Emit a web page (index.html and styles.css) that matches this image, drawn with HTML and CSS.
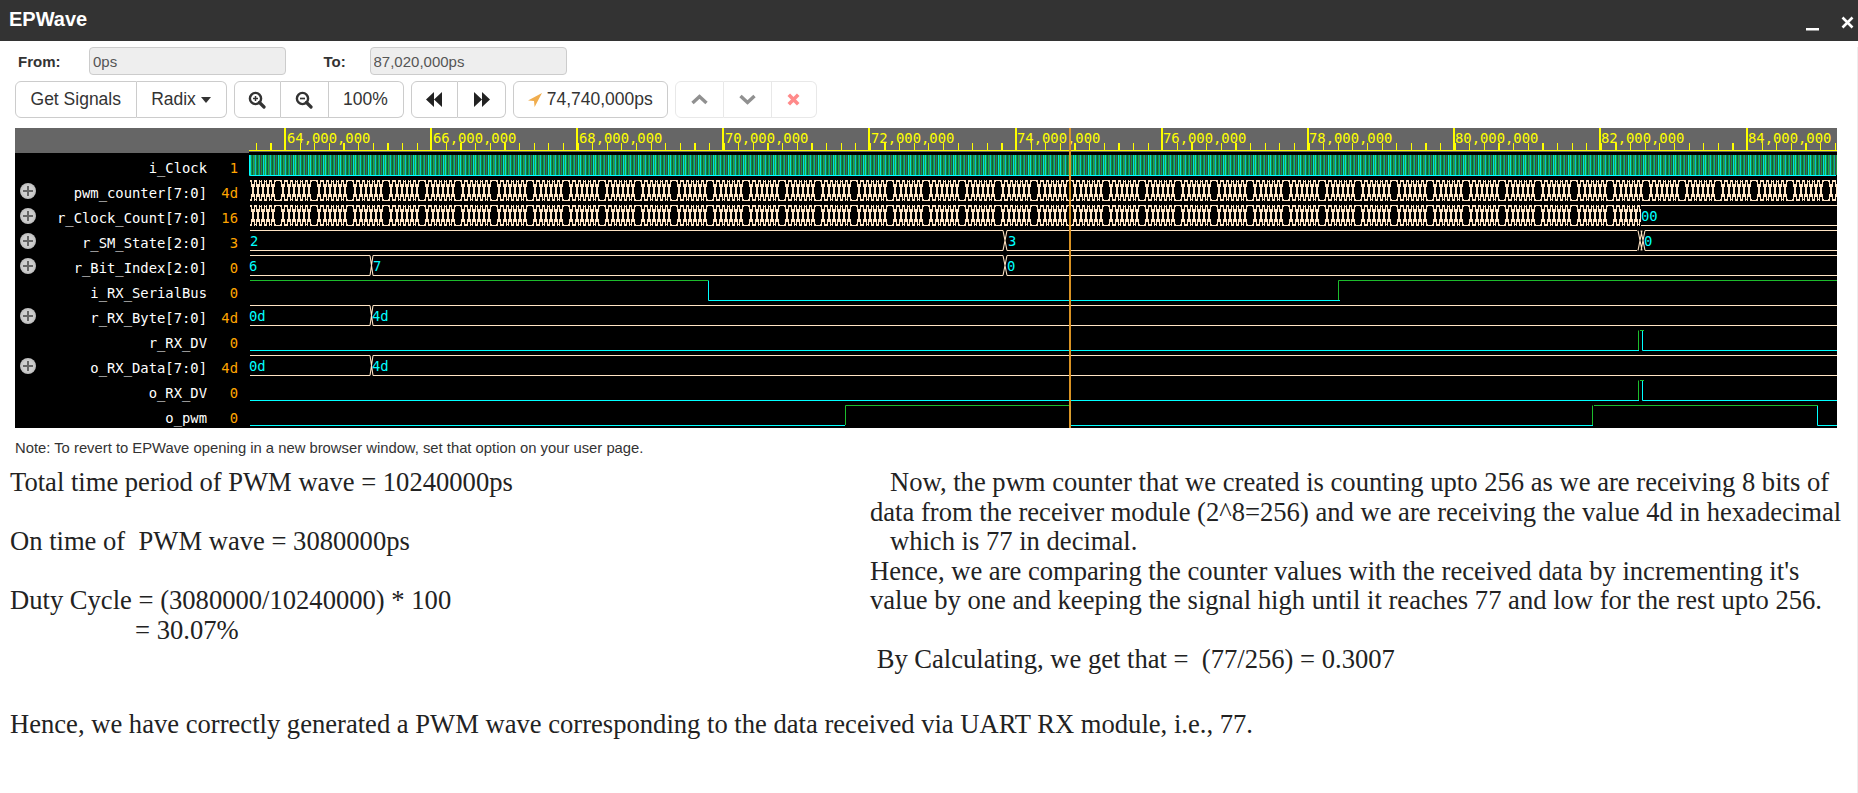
FILE: index.html
```html
<!DOCTYPE html>
<html lang="en">
<head>
<meta charset="utf-8">
<title>EPWave</title>
<link rel="stylesheet" href="styles.css">
</head>
<body>
<div class="app">
  <header class="titlebar">
    <h1 class="title">EPWave</h1>
    <div class="win-actions">
      <svg class="win-min" width="13" height="3" viewBox="0 0 13 3"><rect width="13" height="2.5" fill="#fff"/></svg>
      <svg class="win-close" width="13" height="13" viewBox="0 0 13 13"><path d="M1.5 1.5L11.5 11.5M11.5 1.5L1.5 11.5" stroke="#fff" stroke-width="2.6" fill="none"/></svg>
    </div>
  </header>

  <main class="content">
    <div class="range">
      <label class="range-label range-from">From:</label>
      <input class="range-input" value="0ps" disabled>
      <label class="range-label range-to">To:</label>
      <input class="range-input" value="87,020,000ps" disabled>
    </div>

    <div class="toolbar">
      <div class="btn-group">
        <button class="btn btn-signals">Get Signals</button>
        <button class="btn btn-radix">Radix<span class="caret"></span></button>
      </div>
      <div class="btn-group">
        <button class="btn btn-icon"><svg width="18" height="18" viewBox="0 0 18 18"><circle cx="7.5" cy="7.5" r="5.6" fill="none" stroke="#333" stroke-width="2.4"/><path d="M11.5 11.5L16 16" stroke="#333" stroke-width="3.2" stroke-linecap="round"/><path d="M5 7.5H10M7.5 5V10" stroke="#333" stroke-width="1.5"/></svg></button>
        <button class="btn btn-icon"><svg width="18" height="18" viewBox="0 0 18 18"><circle cx="7.5" cy="7.5" r="5.6" fill="none" stroke="#333" stroke-width="2.4"/><path d="M11.5 11.5L16 16" stroke="#333" stroke-width="3.2" stroke-linecap="round"/><path d="M5 7.5H10" stroke="#333" stroke-width="1.7"/></svg></button>
        <button class="btn btn-zoom">100%</button>
      </div>
      <div class="btn-group">
        <button class="btn btn-icon"><svg width="17" height="15" viewBox="0 0 17 15"><path d="M8 0V15L0 7.5ZM16 0V15L8 7.5Z" fill="#222"/></svg></button>
        <button class="btn btn-icon"><svg width="17" height="15" viewBox="0 0 17 15"><path d="M1 0V15L9 7.5ZM9 0V15L17 7.5Z" fill="#222"/></svg></button>
      </div>
      <div class="btn-group">
        <button class="btn btn-cursor"><svg class="cursor-icon" width="14" height="14" viewBox="0 0 14 14"><path d="M14 0L0 7.6L6 8L6.6 14Z" fill="#f0ad4e"/></svg>74,740,000ps</button>
      </div>
      <div class="btn-group btn-group-off">
        <button class="btn btn-step btn-off"><svg width="17" height="11" viewBox="0 0 17 11"><path d="M1.5 9L8.5 2.5L15.5 9" fill="none" stroke="#555" stroke-width="3.4"/></svg></button>
        <button class="btn btn-step btn-off"><svg width="17" height="11" viewBox="0 0 17 11"><path d="M1.5 2L8.5 8.5L15.5 2" fill="none" stroke="#555" stroke-width="3.4"/></svg></button>
        <button class="btn btn-x btn-off"><svg width="13" height="13" viewBox="0 0 13 13"><path d="M1.8 1.8L11.2 11.2M11.2 1.8L1.8 11.2" fill="none" stroke="#ff4d4d" stroke-width="3.6"/></svg></button>
      </div>
    </div>

    <section class="wave-panel">
      <div class="signals">
        <div class="signals-head"></div>
        <div class="sig"><span class="sig-slot"></span><span class="sig-name">i_Clock</span><span class="sig-val">1</span></div>
        <div class="sig"><span class="sig-slot"><span class="expand"></span></span><span class="sig-name">pwm_counter[7:0]</span><span class="sig-val">4d</span></div>
        <div class="sig"><span class="sig-slot"><span class="expand"></span></span><span class="sig-name">r_Clock_Count[7:0]</span><span class="sig-val">16</span></div>
        <div class="sig"><span class="sig-slot"><span class="expand"></span></span><span class="sig-name">r_SM_State[2:0]</span><span class="sig-val">3</span></div>
        <div class="sig"><span class="sig-slot"><span class="expand"></span></span><span class="sig-name">r_Bit_Index[2:0]</span><span class="sig-val">0</span></div>
        <div class="sig"><span class="sig-slot"></span><span class="sig-name">i_RX_SerialBus</span><span class="sig-val">0</span></div>
        <div class="sig"><span class="sig-slot"><span class="expand"></span></span><span class="sig-name">r_RX_Byte[7:0]</span><span class="sig-val">4d</span></div>
        <div class="sig"><span class="sig-slot"></span><span class="sig-name">r_RX_DV</span><span class="sig-val">0</span></div>
        <div class="sig"><span class="sig-slot"><span class="expand"></span></span><span class="sig-name">o_RX_Data[7:0]</span><span class="sig-val">4d</span></div>
        <div class="sig"><span class="sig-slot"></span><span class="sig-name">o_RX_DV</span><span class="sig-val">0</span></div>
        <div class="sig"><span class="sig-slot"></span><span class="sig-name">o_pwm</span><span class="sig-val">0</span></div>
      </div>

      <svg class="waves" width="1588" height="300" viewBox="249 128 1588 300">
        <defs>
          <pattern id="clk" patternUnits="userSpaceOnUse" x="250" y="155" width="15" height="20">
            <rect width="15" height="20" fill="#0b5a48"/>
            <rect x="0" width="1" height="20" fill="#00dcd8"/>
            <rect x="1" width="1" height="20" fill="#1a9a40"/>
            <rect x="3" width="1" height="20" fill="#22a83c"/>
            <rect x="4" width="1" height="20" fill="#2f8070"/>
            <rect x="5" width="1" height="20" fill="#00c8c4"/>
            <rect x="6" width="1" height="20" fill="#128a3c"/>
            <rect x="8" width="1" height="20" fill="#1e9c38"/>
            <rect x="9" width="1" height="20" fill="#0aa8a0"/>
            <rect x="10" width="1" height="20" fill="#444"/>
            <rect x="11" width="1" height="20" fill="#1a9a40"/>
            <rect x="13" width="1" height="20" fill="#00dcd8"/>
            <rect x="14" width="1" height="20" fill="#22a83c"/>
          </pattern>
          <pattern id="bus" patternUnits="userSpaceOnUse" x="250" y="180" width="36" height="25">
            <path class="bus-line" d="M1 .5L5 20.5M5 .5L1 20.5M6 .5L10 20.5M10 .5L6 20.5M11 .5L15 20.5M15 .5L11 20.5M16 .5L20 20.5M20 .5L16 20.5M21 .5L25 20.5M25 .5L21 20.5M31 .5L35 20.5M35 .5L31 20.5M25 .5H31M25 20.5H31M5 .5H6M15 20.5H16M10 20.5H11M20 .5H21M35 .5H36M35 20.5H36M0 .5H1M0 20.5H1"/>
          </pattern>
        </defs>

        <rect class="ruler-bg" x="249" y="128" width="1588" height="24"/>
        <line class="tick-minor" x1="255.76" y1="146.5" x2="1837" y2="146.5"/>
        <line class="tick-major" x1="285" y1="128" x2="285" y2="150"/>
        <line class="tick-major" x1="431" y1="128" x2="431" y2="150"/>
        <line class="tick-major" x1="577" y1="128" x2="577" y2="150"/>
        <line class="tick-major" x1="723" y1="128" x2="723" y2="150"/>
        <line class="tick-major" x1="869" y1="128" x2="869" y2="150"/>
        <line class="tick-major" x1="1016" y1="128" x2="1016" y2="150"/>
        <line class="tick-major" x1="1162" y1="128" x2="1162" y2="150"/>
        <line class="tick-major" x1="1308" y1="128" x2="1308" y2="150"/>
        <line class="tick-major" x1="1454" y1="128" x2="1454" y2="150"/>
        <line class="tick-major" x1="1600" y1="128" x2="1600" y2="150"/>
        <line class="tick-major" x1="1747" y1="128" x2="1747" y2="150"/>
        <rect class="ruler-line" x="249" y="150" width="1588" height="1"/>
        <g class="ruler-text">
          <text x="287" y="143">64,000,000</text>
          <text x="433" y="143">66,000,000</text>
          <text x="579" y="143">68,000,000</text>
          <text x="725" y="143">70,000,000</text>
          <text x="871" y="143">72,000,000</text>
          <text x="1017" y="143">74,000,000</text>
          <text x="1163" y="143">76,000,000</text>
          <text x="1309" y="143">78,000,000</text>
          <text x="1455" y="143">80,000,000</text>
          <text x="1601" y="143">82,000,000</text>
          <text x="1748" y="143">84,000,000</text>
        </g>

        <!-- i_Clock -->
        <rect x="250" y="155" width="1587" height="20" fill="url(#clk)"/>
        <path class="wire-low" d="M249.5 155V175.5H1836"/>

        <!-- pwm_counter / r_Clock_Count -->
        <rect x="250" y="180" width="1587" height="21" fill="url(#bus)"/>
        <rect x="250" y="205" width="1391" height="21" fill="url(#bus)"/>
        <path class="bus" d="M1641 205.5H1837M1641 225.5H1837"/>

        <!-- r_SM_State -->
        <path class="bus" d="M250 230.5H1003M1007 230.5H1637M1645 230.5H1837M250 250.5H1003M1007 250.5H1637M1645 250.5H1837"/>
        <path class="bus" d="M1003 230.5L1007 250.5M1007 230.5L1003 250.5M1638 230.5L1642 250.5M1642 230.5L1638 250.5M1641 230.5L1645 250.5M1645 230.5L1641 250.5"/>

        <!-- r_Bit_Index -->
        <path class="bus" d="M250 255.5H370M373 255.5H1003M1007 255.5H1837M250 275.5H370M373 275.5H1003M1007 275.5H1837"/>
        <path class="bus" d="M370 255.5L373 275.5M373 255.5L370 275.5M1003 255.5L1007 275.5M1007 255.5L1003 275.5"/>

        <!-- i_RX_SerialBus -->
        <path class="wire-high" d="M250 280.5H708M1338.5 300V280.5H1837"/>
        <path class="wire-low" d="M708.5 280.5V300.5H1340"/>

        <!-- r_RX_Byte -->
        <path class="bus" d="M250 305.5H370M373 305.5H1837M250 325.5H370M373 325.5H1837"/>
        <path class="bus" d="M370 305.5L373 325.5M373 305.5L370 325.5"/>

        <!-- r_RX_DV -->
        <path class="wire-low" d="M250 350.5H1639M1642.5 330.5V350.5H1837"/>
        <path class="wire-high" d="M1638.5 350V330.5M1640 330.5H1644"/>

        <!-- o_RX_Data -->
        <path class="bus" d="M250 355.5H370M373 355.5H1837M250 375.5H370M373 375.5H1837"/>
        <path class="bus" d="M370 355.5L373 375.5M373 355.5L370 375.5"/>

        <!-- o_RX_DV -->
        <path class="wire-low" d="M250 400.5H1639M1642.5 380.5V400.5H1837"/>
        <path class="wire-high" d="M1638.5 400V380.5M1640 380.5H1644"/>

        <!-- o_pwm -->
        <path class="wire-low" d="M250 425.5H845M1070.5 405.5V425.5H1593M1817.5 405.5V425.5H1837"/>
        <path class="wire-high" d="M845.5 425V405.5H1070M1592.5 425V405.5M1594 405.5H1818"/>

        <g class="bus-text">
          <text x="1641" y="221">00</text>
          <text x="250" y="246">2</text>
          <text x="1008" y="246">3</text>
          <text x="1644" y="246">0</text>
          <text x="249" y="271">6</text>
          <text x="373" y="271">7</text>
          <text x="1007" y="271">0</text>
          <text x="249" y="321">0d</text>
          <text x="372" y="321">4d</text>
          <text x="249" y="371">0d</text>
          <text x="372" y="371">4d</text>
        </g>

        <line class="cursor" x1="1070" y1="128" x2="1070" y2="428"/>
      </svg>
    </section>

    <p class="note">Note: To revert to EPWave opening in a new browser window, set that option on your user page.</p>

    <section class="report">
      <div class="report-cols">
        <div class="report-left">Total time period of PWM wave = 10240000ps

On time of  PWM wave = 3080000ps

Duty Cycle = (3080000/10240000) * 100
<span class="indent"></span>= 30.07%</div>
        <div class="report-right">   Now, the pwm counter that we created is counting upto 256 as we are receiving 8 bits of
data from the receiver module (2^8=256) and we are receiving the value 4d in hexadecimal
   which is 77 in decimal.
Hence, we are comparing the counter values with the received data by incrementing it's
value by one and keeping the signal high until it reaches 77 and low for the rest upto 256.

 By Calculating, we get that =  (77/256) = 0.3007</div>
      </div>
      <p class="report-end">Hence, we have correctly generated a PWM wave corresponding to the data received via UART RX module, i.e., 77.</p>
    </section>
  </main>
</div>
</body>
</html>
```
FILE: styles.css
```css
* { box-sizing: border-box; }
html, body { margin: 0; padding: 0; background: #fff; }
body { font-family: "Liberation Sans", Arial, sans-serif; color: #333; overflow: hidden; }
.app { width: 1858px; height: 793px; overflow: hidden; }

.titlebar { height: 41px; background: #333; display: flex; align-items: center; justify-content: space-between; padding: 0 4px 0 9px; }
.title { margin: 0 0 4px; font-size: 20px; line-height: 32px; font-weight: 700; color: #fff; }
.win-actions { display: flex; align-items: flex-start; gap: 22px; height: 30px; }
.win-min { margin-top: 22px; }
.win-close { margin-top: 10px; }

.content { border-right: 1px solid #eee; height: 752px; }

.range { display: flex; align-items: center; height: 28px; margin-top: 6px; }
.range-label { font-size: 15px; font-weight: 700; color: #333; }
.range-from { margin-left: 18px; width: 71px; }
.range-to { margin-left: 37.5px; width: 46px; }
.range-input { width: 197px; height: 28px; padding: 0 3px; border: 1px solid #ccc; border-radius: 4px; background: #eee; font: 15px "Liberation Sans", Arial, sans-serif; color: #555; opacity: 1; }

.toolbar { display: flex; gap: 7px; margin: 6px 0 0 15px; height: 37px; }
.btn-group { display: flex; }
.btn { height: 37px; padding: 0; border: 1px solid #ccc; border-left-width: 0; background: #fff; color: #333; font: 17.5px "Liberation Sans", Arial, sans-serif; display: flex; align-items: center; justify-content: center; }
.btn:first-child { border-left-width: 1px; border-radius: 6px 0 0 6px; }
.btn:last-child { border-radius: 0 6px 6px 0; }
.btn:only-child { border-radius: 6px; }
.btn-signals { width: 121.5px; }
.btn-radix { width: 90px; }
.btn-icon { width: 47.5px; }
.btn-zoom { width: 75px; }
.btn-cursor { width: 155.5px; }
.btn-step { width: 48.5px; }
.btn-x { width: 44.5px; }
.cursor-icon { margin-right: 5px; }
.caret { display: inline-block; margin-left: 5px; border-style: solid; border-width: 6px 5.5px 0; border-color: #333 transparent transparent; }
.btn-group-off { opacity: .65; }
.btn-off { border-color: #ddd; }

.wave-panel { display: flex; width: 1822px; height: 300px; margin: 10px 0 0 15px; background: #000; overflow: hidden; }
.signals { width: 234px; flex: none; }
.signals-head { height: 25px; margin-bottom: 2px; background: #666; }
.sig { display: flex; align-items: center; height: 25px; padding: 0 11px 0 5px; font: 13.85px "DejaVu Sans Mono", monospace; }
.sig-slot { width: 16px; flex: none; }
.expand { display: block; position: relative; width: 16px; height: 16px; margin-top: -3px; border-radius: 50%; background: radial-gradient(circle, #cfcfcf 45%, #a6a6a6 100%); }
.expand::before { content: ""; position: absolute; left: 3px; top: 7px; width: 10px; height: 2px; background: #666; }
.expand::after { content: ""; position: absolute; left: 7px; top: 3px; width: 2px; height: 10px; background: #666; }
.sig-name { flex: 1; text-align: right; color: #fff; white-space: nowrap; }
.sig-val { width: 31px; flex: none; text-align: right; color: #ffa500; }

.waves { display: block; flex: none; }
.ruler-bg { fill: #666; }
.ruler-line { fill: #ff0; }
.tick-minor { stroke: #ff0; stroke-width: 7; stroke-dasharray: 1.2 13.42; shape-rendering: crispEdges; }
.tick-major { stroke: #ff0; stroke-width: 1.2; shape-rendering: crispEdges; }
.ruler-text text { font: 13.85px "DejaVu Sans Mono", monospace; fill: #ff0; }
.bus-text text { font: 13.85px "DejaVu Sans Mono", monospace; fill: #0ff; }
.bus { fill: none; stroke: #ffe4c4; stroke-width: 1.1; }
.bus-line { fill: none; stroke: #ffe4c4; stroke-width: 1.6; shape-rendering: crispEdges; }
.wire-low { fill: none; stroke: #0ff; stroke-width: 1; }
.wire-high { fill: none; stroke: #1cbc2c; stroke-width: 1; }
.cursor { stroke: #e59a25; stroke-width: 2; opacity: .95; }

.note { margin: 11px 0 0 15px; font-size: 14.8px; line-height: 18px; color: #333; }

.report { font-family: "Liberation Serif", "Times New Roman", serif; font-size: 26.6px; line-height: 29.5px; color: #222; }
.report-cols { display: grid; grid-template-columns: 870px 1fr; margin-top: 11px; }
.report-left { padding-left: 10px; white-space: pre; }
.report-right { white-space: pre; }
.indent { display: inline-block; width: 125px; }
.report-end { margin: 35px 0 0 10px; white-space: pre; }
```
